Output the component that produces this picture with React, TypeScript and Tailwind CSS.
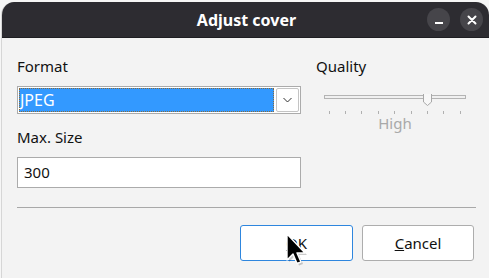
import React from "react";

const ticks = [329, 345, 361, 378, 394, 411, 427, 443, 460];

function QualitySlider() {
  // slider area starts at x=316 in page coords
  return (
    <svg width="156" height="30" className="block">
      <rect x="8.5" y="1.5" width="141" height="3" fill="#f0f0f0" stroke="#b4b4b4" />
      <path d="M107.5 -3.5 H115.5 V8 L111.5 11.5 L107.5 8 Z" fill="#f7f7f7" stroke="#a8a8a8" />
      {ticks.map((t) => (
        <line key={t} x1={t - 316 + 0.5} x2={t - 316 + 0.5} y1="17" y2="20" stroke="#b0b0b0" />
      ))}
    </svg>
  );
}

export default function App() {
  return (
    <div className="relative w-[489px] h-[278px] overflow-hidden bg-[#f6f6f6]" style={{ fontFamily: '"Noto Sans", "Open Sans", sans-serif' }}>
      <div className="mt-[2px] ml-px h-[276px] flex flex-col rounded-t-[13px] overflow-hidden border-l border-[#d6d6d6]">
        {/* title bar */}
        <div className="relative h-[36px] shrink-0 bg-[#2d2c31] flex items-center justify-center border-b border-[#1e1e22]">
          <span className="text-white font-bold text-[16px] ml-[2px]">Adjust cover</span>
          <div className="absolute right-[6px] top-[6px] flex gap-[10px]">
            <div className="w-[23px] h-[23px] rounded-full bg-[#46454a] flex items-center justify-center">
              <div className="w-[8px] h-[2px] bg-white mt-[6px]" />
            </div>
            <div className="w-[23px] h-[23px] rounded-full bg-[#46454a] flex items-center justify-center">
              <svg width="10" height="10" viewBox="0 0 10 10">
                <path d="M1.5 1.5 L8.5 8.5 M8.5 1.5 L1.5 8.5" stroke="white" strokeWidth="2" strokeLinecap="round" />
              </svg>
            </div>
          </div>
        </div>

        {/* body */}
        <div className="flex-1 bg-[#f3f3f3] pl-[15px] pr-[13px] pt-[18px] text-[15px] text-[#111]">
          <div className="flex gap-[15px]">
            <div className="w-[284px] shrink-0 flex flex-col">
              <div className="h-[20px] leading-[20px]">Format</div>
              <div className="mt-[10px] h-[28px] border border-[#ababab] bg-white flex items-stretch p-px">
                <div className="flex-1 bg-[#3399ff] outline outline-1 outline-dotted outline-[#8a6a3a] -outline-offset-1 flex items-center pl-[1px] text-white text-[16px]">
                  JPEG
                </div>
                <div className="w-[23px] ml-[2px] bg-white border border-[#c4c4c4] rounded-[2px] flex items-center justify-center">
                  <svg width="9" height="6" viewBox="0 0 9 6">
                    <path d="M0.5 1 L4.5 5 L8.5 1" fill="none" stroke="#333" strokeWidth="1" />
                  </svg>
                </div>
              </div>
              <div className="mt-[13px] h-[20px] leading-[20px]">Max. Size</div>
              <div className="mt-[10px] h-[31px] border border-[#ababab] bg-white flex items-center pl-[6px]">300</div>
            </div>
            <div className="flex-1 flex flex-col">
              <div className="h-[20px] leading-[20px]">Quality</div>
              <div className="mt-[18px]">
                <QualitySlider />
              </div>
              <div className="-mt-[11px] ml-[62px] w-[34px] text-center text-[#a9a9a9] leading-[20px]">High</div>
            </div>
          </div>

          <div className="mt-[19px] h-px bg-[#a8a8a8]" />

          <div className="mt-[17px] flex justify-end gap-[9px] mr-[2px]">
            <div className="w-[113px] h-[36px] rounded-[3px] border border-[#2e86de] bg-white flex items-center justify-center">
              <span><span className="underline">O</span>K</span>
            </div>
            <div className="w-[112px] h-[36px] rounded-[3px] border border-[#adadad] bg-white flex items-center justify-center">
              <span><span className="underline">C</span>ancel</span>
            </div>
          </div>
        </div>
      </div>

      {/* mouse pointer */}
      <svg className="absolute left-[286px] top-[233px]" width="24" height="36" viewBox="0 0 24 36">
        <path d="M1 1 L1 27 L7 21 L11 30.5 L15 29 L11 20 L19 20 Z" fill="#000" fillOpacity="0.2" transform="translate(2,2)" />
        <path d="M1 1 L1 27 L7 21 L11 30.5 L15 29 L11 20 L19 20 Z" fill="#000" stroke="#fff" strokeWidth="1.4" strokeLinejoin="round" />
      </svg>
    </div>
  );
}
